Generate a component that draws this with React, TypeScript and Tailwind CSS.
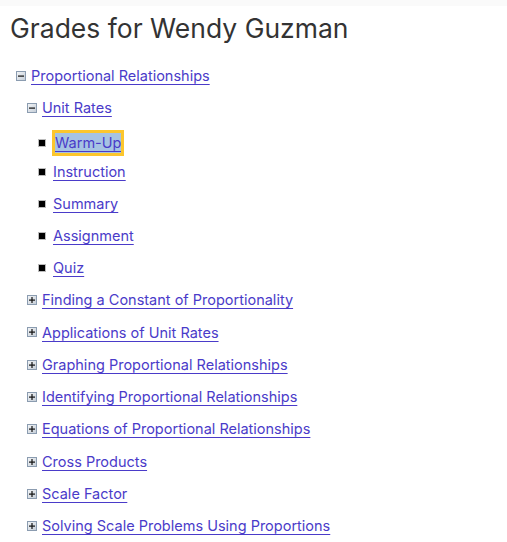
import React from 'react'

const units = [
    'Finding a Constant of Proportionality',
    'Applications of Unit Rates',
    'Graphing Proportional Relationships',
    'Identifying Proportional Relationships',
    'Equations of Proportional Relationships',
    'Cross Products',
    'Scale Factor',
    'Solving Scale Problems Using Proportions',
]

const lessons = ['Instruction', 'Summary', 'Assignment', 'Quiz']

function ToggleIcon({ open }: { open: boolean }) {
    return (
        <svg width="10" height="10" viewBox="0 0 10 10" className="shrink-0">
            <defs>
                <linearGradient id={open ? 'tg-o' : 'tg-c'} x1="0" y1="0" x2="1" y2="1">
                    <stop offset="0" stopColor="#f4f6f8" />
                    <stop offset="1" stopColor="#c3ccd6" />
                </linearGradient>
            </defs>
            <rect x="0.5" y="0.5" width="9" height="9" fill={`url(#${open ? 'tg-o' : 'tg-c'})`} stroke="#8b9cb0" />
            <rect x="2" y="4.5" width="6" height="1.2" fill="#111" />
            {!open && <rect x="4.4" y="2" width="1.2" height="6" fill="#111" />}
        </svg>
    )
}

const linkCls = 'text-[#4a3bc9] underline underline-offset-[3px] decoration-1'

export default function App() {
    return (
        <div className="min-h-screen bg-white" style={{ fontFamily: 'Inter, "Noto Sans", sans-serif' }}>
            <div className="h-[6px] bg-[#fafafa]" />
            <div className="px-[10px]">
                <h1 className="text-[26.5px] leading-[32px] text-[#333] mt-[6px]">Grades for Wendy Guzman</h1>

                <ul className="mt-[16px] text-[14.5px]">
                    <li>
                        <div className="h-[32px] flex items-center gap-[5px] pl-[6px]">
                            <ToggleIcon open />
                            <a href="#" className={linkCls}>Proportional Relationships</a>
                        </div>
                        <ul className="pl-[11px]">
                            <li>
                                <div className="h-[32px] flex items-center gap-[5px] pl-[6px]">
                                    <ToggleIcon open />
                                    <a href="#" className={linkCls}>Unit Rates</a>
                                </div>
                                <ul className="pl-[18px]">
                                    <li className="h-[32px] pt-[6px] flex items-center gap-[8px]">
                                        <span className="w-[6px] h-[6px] bg-black ring-1 ring-[#bbb]" />
                                        <a href="#" className={`${linkCls} bg-[#a6c3e3] outline-[3px] outline-solid outline-[#fcc62d] ml-[2px] leading-[20px]`}>Warm-Up</a>
                                    </li>
                                    {lessons.map((l) => (
                                        <li key={l} className="h-[32px] flex items-center gap-[8px]">
                                            <span className="w-[6px] h-[6px] bg-black ring-1 ring-[#bbb]" />
                                            <a href="#" className={linkCls}>{l}</a>
                                        </li>
                                    ))}
                                </ul>
                            </li>
                            {units.map((u) => (
                                <li key={u} className="h-[32.3px] flex items-center gap-[5px] pl-[6px]">
                                    <ToggleIcon open={false} />
                                    <a href="#" className={linkCls}>{u}</a>
                                </li>
                            ))}
                        </ul>
                    </li>
                </ul>
            </div>
        </div>
    )
}
